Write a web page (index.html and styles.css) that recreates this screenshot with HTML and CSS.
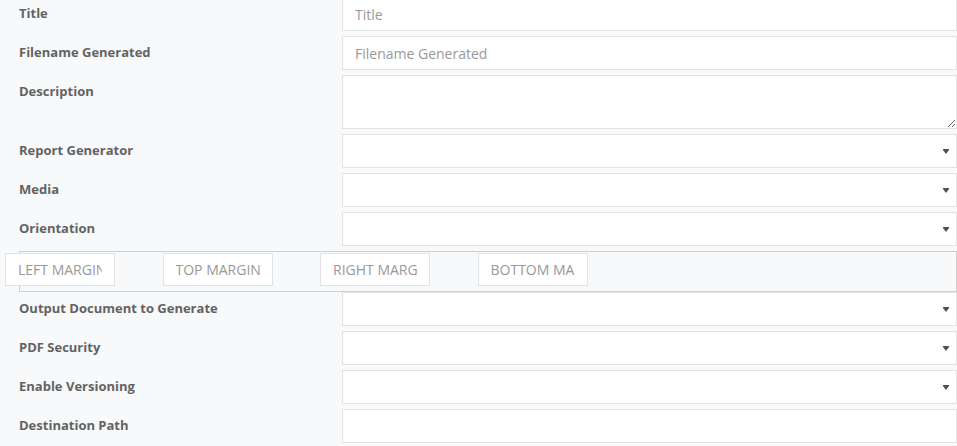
FILE: index.html
```html
<!DOCTYPE html>
<html>
<head>
<meta charset="utf-8">
<link rel="stylesheet" href="styles.css">
</head>
<body>
<form class="form">
  <div class="row">
    <label class="label">Title</label>
    <input class="field" type="text" placeholder="Title">
  </div>
  <div class="row">
    <label class="label">Filename Generated</label>
    <input class="field" type="text" placeholder="Filename Generated">
  </div>
  <div class="row">
    <label class="label">Description</label>
    <textarea class="field area"></textarea>
  </div>
  <div class="row">
    <label class="label">Report Generator</label>
    <div class="field select"><svg class="caret" width="6" height="5" viewBox="0 0 6 5"><path d="M0 0H6V1L3 5L0 1Z" fill="#505050"/></svg></div>
  </div>
  <div class="row">
    <label class="label">Media</label>
    <div class="field select"><svg class="caret" width="6" height="5" viewBox="0 0 6 5"><path d="M0 0H6V1L3 5L0 1Z" fill="#505050"/></svg></div>
  </div>
  <div class="row">
    <label class="label">Orientation</label>
    <div class="field select"><svg class="caret" width="6" height="5" viewBox="0 0 6 5"><path d="M0 0H6V1L3 5L0 1Z" fill="#505050"/></svg></div>
  </div>
  <div class="margins">
    <div class="margin-list">
      <input class="margin" type="text" placeholder="LEFT MARGIN">
      <input class="margin" type="text" placeholder="TOP MARGIN">
      <input class="margin" type="text" placeholder="RIGHT MARGIN">
      <input class="margin" type="text" placeholder="BOTTOM MARGIN">
    </div>
  </div>
  <div class="row">
    <label class="label">Output Document to Generate</label>
    <div class="field select"><svg class="caret" width="6" height="5" viewBox="0 0 6 5"><path d="M0 0H6V1L3 5L0 1Z" fill="#505050"/></svg></div>
  </div>
  <div class="row">
    <label class="label">PDF Security</label>
    <div class="field select"><svg class="caret" width="6" height="5" viewBox="0 0 6 5"><path d="M0 0H6V1L3 5L0 1Z" fill="#505050"/></svg></div>
  </div>
  <div class="row">
    <label class="label">Enable Versioning</label>
    <div class="field select"><svg class="caret" width="6" height="5" viewBox="0 0 6 5"><path d="M0 0H6V1L3 5L0 1Z" fill="#505050"/></svg></div>
  </div>
  <div class="row">
    <label class="label">Destination Path</label>
    <input class="field" type="text">
  </div>
</form>
</body>
</html>
```
FILE: styles.css
```css
html, body {
  margin: 0;
  padding: 0;
  background: #f8f9fb;
  overflow: hidden;
}
body {
  font-family: "Open Sans", "Liberation Sans", sans-serif;
  width: 957px;
  height: 446px;
}
.form {
  display: flex;
  flex-direction: column;
  margin-top: -3px;
}
.row {
  display: grid;
  grid-template-columns: 342px 615px;
  margin-bottom: 5px;
}
.label {
  padding: 7px 0 0 19px;
  font-size: 13px;
  line-height: 18px;
  font-weight: 700;
  color: #636363;
}
.field {
  box-sizing: border-box;
  height: 34px;
  width: 615px;
  margin: 0;
  border: 1px solid #e3e3e3;
  background: #fff;
  padding: 0 12px;
  font-family: "Open Sans", "Liberation Sans", sans-serif;
  font-size: 14px;
  color: #555;
  outline: none;
  border-radius: 0;
}
.field::placeholder, .margin::placeholder {
  color: #999;
}
.area {
  height: 54px;
  resize: vertical;
  display: block;
}
.select {
  display: flex;
  align-items: center;
  justify-content: flex-end;
  padding-right: 7px;
}
.caret {
  display: block;
  margin-top: 1px;
}
.margins {
  box-sizing: border-box;
  margin-left: 19px;
  height: 41px;
  border: 1px solid #cfcfcf;
  width: 938px;
  background: #f8f9fb;
}
.margin-list {
  display: flex;
  gap: 47.5px;
  margin-left: -15px;
  padding-top: 1px;
}
.margin {
  box-sizing: border-box;
  width: 110px;
  height: 33px;
  margin: 0;
  border: 1px solid #e3e3e3;
  background: #fff;
  padding: 0 12px;
  font-family: "Open Sans", "Liberation Sans", sans-serif;
  font-size: 14px;
  color: #555;
  outline: none;
  border-radius: 0;
}
```
